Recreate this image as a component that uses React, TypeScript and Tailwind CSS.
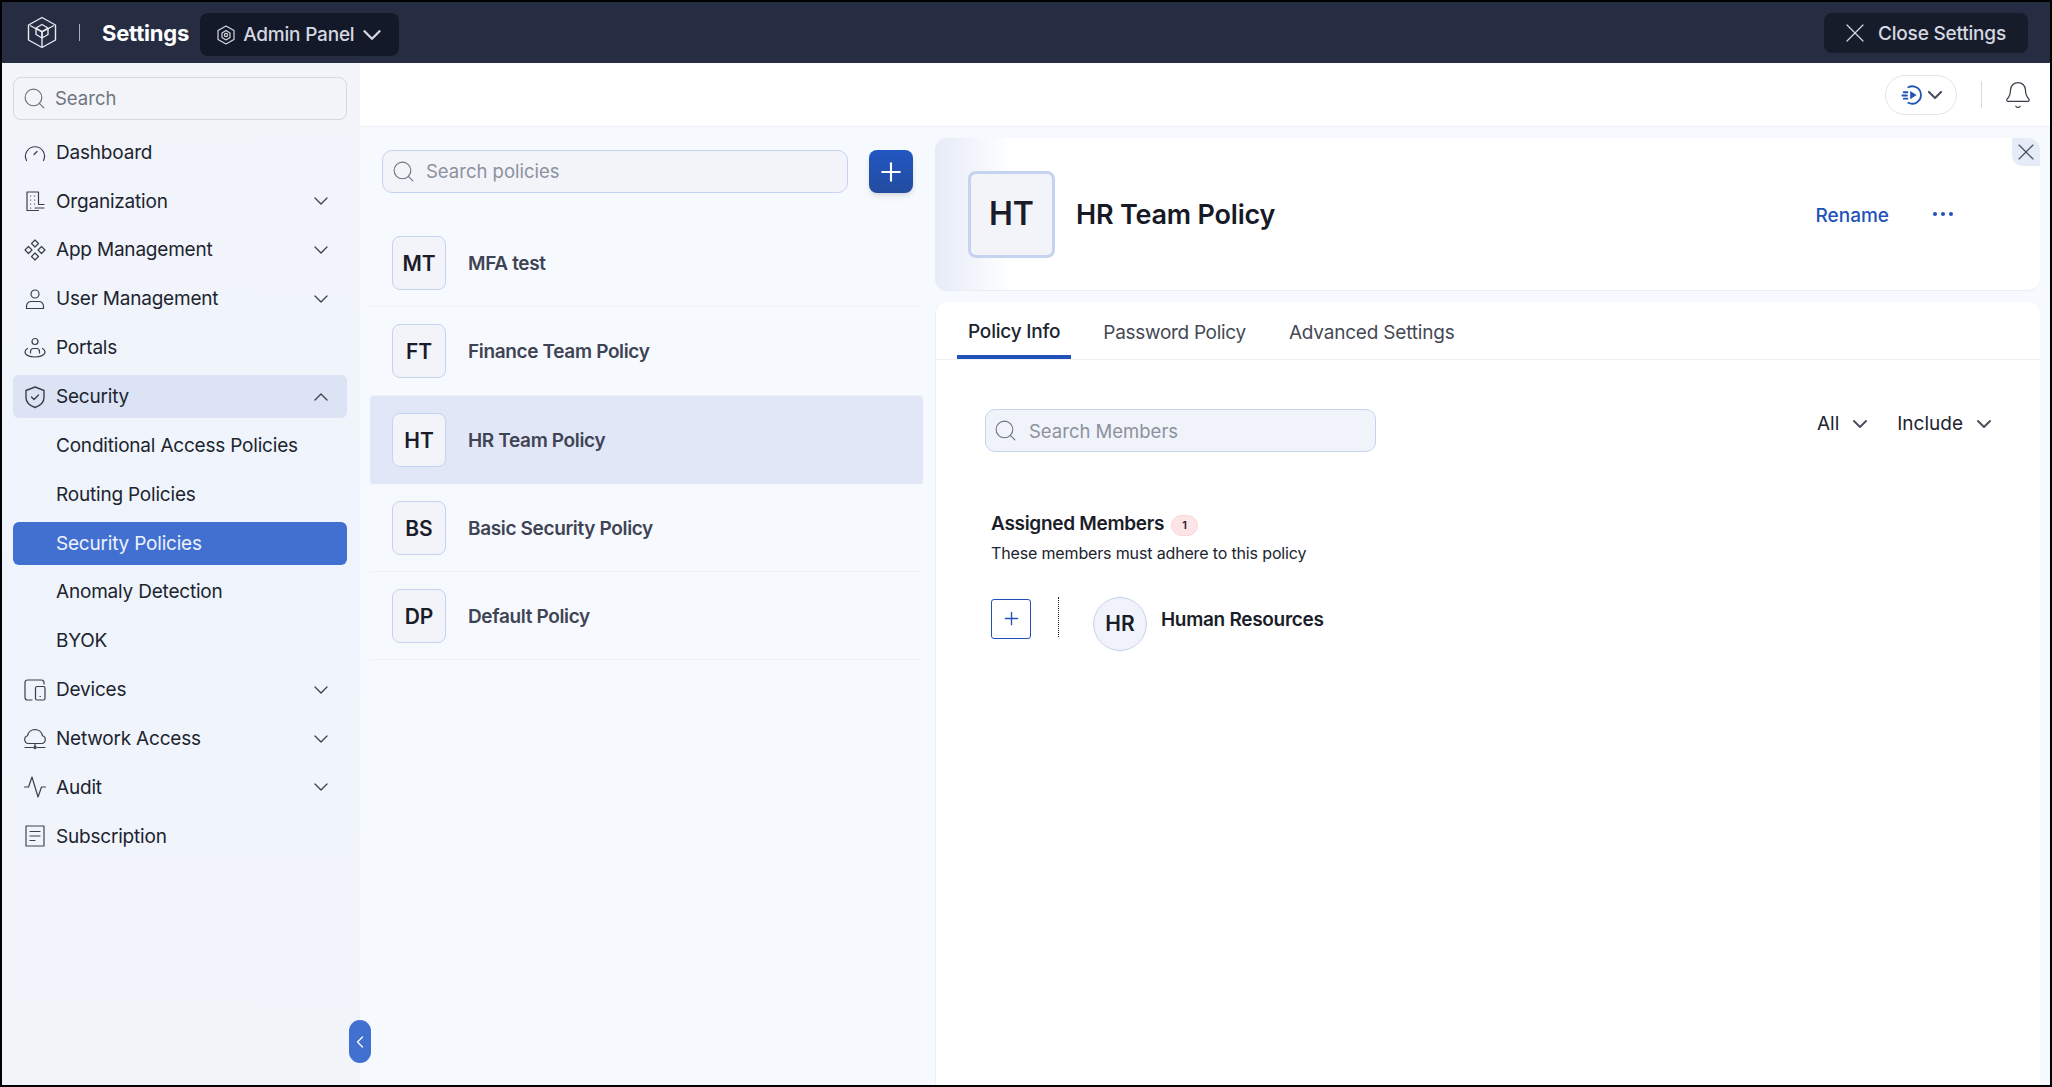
import React from 'react';
import { Search, ChevronDown, ChevronUp, ChevronLeft, X, Plus, Bell } from 'lucide-react';

type IconProps = { className?: string };

const Svg: React.FC<IconProps & { children: React.ReactNode; w?: number }> = ({ className, children, w = 1.2 }) => (
  <svg viewBox="0 0 24 24" fill="none" stroke="currentColor" strokeWidth={w} strokeLinecap="round" strokeLinejoin="round" className={className}>
    {children}
  </svg>
);

const LogoIcon: React.FC<IconProps> = ({ className }) => (
  <svg viewBox="0 0 30 33" fill="none" stroke="currentColor" strokeWidth={1.4} strokeLinejoin="round" className={className}>
    <path d="M15 1.5 28.5 9v15L15 31.5 1.5 24V9z" />
    <path d="M3 9.5 15 16l12-6.500M15 16v15" />
    <path d="M15 8.500 21 12v6.500l-6 3.500-6-3.500V12z" />
    <path d="M9 12l6 3.500 6-3.500M15 15.500V22" />
  </svg>
);

const HexIcon: React.FC<IconProps> = ({ className }) => (
  <svg viewBox="0 0 18 20" fill="none" stroke="currentColor" strokeWidth={1.2} strokeLinejoin="round" className={className}>
    <path d="M9 1 17 5.500v9L9 19l-8-4.500v-9z" />
    <path d="M9 5.500 13 8v4.500L9 15l-4-2.500V8z" />
    <circle cx="9" cy="10" r="1.600" />
  </svg>
);

const DashboardIcon: React.FC<IconProps> = ({ className }) => (
  <Svg className={className}>
    <path d="M3.500 19.500a9.500 9.500 0 1 1 17 0" />
    <path d="m11 13.500 3-3" />
  </Svg>
);
const OrgIcon: React.FC<IconProps> = ({ className }) => (
  <Svg className={className}>
    <path d="M15.500 21.500H4V3h11.500v12" />
    <path d="M7.500 7h.2M11.500 7h.2M7.500 11h.2M11.500 11h.2M7.500 15h.2M7.500 19h.2M11.500 15h.2M15.500 15.500H21M12 19h9" />
  </Svg>
);
const AppIcon: React.FC<IconProps> = ({ className }) => (
  <Svg className={className}>
    <path d="m12 2 3.500 3.500L12 9 8.500 5.500zM12 15l3.500 3.500L12 22l-3.500-3.500zM5.500 8.500 9 12l-3.500 3.500L2 12zM18.500 8.500 22 12l-3.500 3.500L15 12z" />
  </Svg>
);
const UserIcon: React.FC<IconProps> = ({ className }) => (
  <Svg className={className}>
    <circle cx="12" cy="7" r="4" />
    <path d="M3.500 21.500v-2.500a4.500 4.500 0 0 1 4.500-4.500h8a4.500 4.500 0 0 1 4.500 4.500v2.500z" />
  </Svg>
);
const PortalIcon: React.FC<IconProps> = ({ className }) => (
  <Svg className={className}>
    <circle cx="12" cy="5.500" r="3" />
    <path d="M7.500 17v-1.500a3 3 0 0 1 3-3h3a3 3 0 0 1 3 3V17" />
    <path d="M4.500 12.500C2.900 13.400 2 14.600 2 16c0 3 4.500 5 10 5s10-2 10-5c0-1.400-.9-2.600-2.500-3.500" />
  </Svg>
);
const ShieldIcon: React.FC<IconProps> = ({ className }) => (
  <Svg className={className} w={1.4}>
    <path d="M12 2 21 5.500v7c0 5-4 8.300-9 10-5-1.700-9-5-9-10v-7z" />
    <path d="m8.500 12 2.500 2.500 4.500-4.500" />
  </Svg>
);
const DevicesIcon: React.FC<IconProps> = ({ className }) => (
  <Svg className={className}>
    <path d="M9 22H4.500A2.500 2.500 0 0 1 2 19.500v-15A2.500 2.500 0 0 1 4.500 2h14a2.500 2.500 0 0 1 2.500 2.500V6" />
    <rect x="12.500" y="8.500" width="9.500" height="13.500" rx="1.500" />
    <path d="M17 18.500h.4" />
  </Svg>
);
const NetworkIcon: React.FC<IconProps> = ({ className }) => (
  <Svg className={className}>
    <path d="M6 16.500h-.5a4 4 0 0 1-1-7.800A7.800 7.800 0 0 1 12 2.500a7.800 7.800 0 0 1 7.500 6.200 4 4 0 0 1-1 7.800z" />
    <path d="M12 16.500v4M2 20.500h7.500M14.500 20.500H22" />
    <circle cx="12" cy="20.500" r="1.200" />
  </Svg>
);
const AuditIcon: React.FC<IconProps> = ({ className }) => (
  <Svg className={className}>
    <path d="M1.500 12H5.500L9 2l6 20 3.500-10h4" />
  </Svg>
);
const ReceiptIcon: React.FC<IconProps> = ({ className }) => (
  <Svg className={className}>
    <path d="M3 2h18v20H3z" strokeDasharray="1.600 .6" />
    <path d="M7 7.500h10M7 12h10M7 16.500h5" />
  </Svg>
);
const PlayFastIcon: React.FC<IconProps> = ({ className }) => (
  <svg viewBox="0 0 24 24" fill="none" stroke="currentColor" strokeWidth={2} strokeLinecap="round" className={className}>
    <path d="M8 3.500a9.500 9.500 0 1 1 0 17M3 9h4M1.500 12.500h5M3 16h4" />
    <path d="M10 7.500 17 12l-7 4.500z" fill="currentColor" stroke="none" />
  </svg>
);

type NavItem = {
  label: string;
  icon?: React.FC<IconProps>;
  chevron?: 'down' | 'up';
  state?: 'open' | 'active';
};

const navItems: NavItem[] = [
  { label: 'Dashboard', icon: DashboardIcon },
  { label: 'Organization', icon: OrgIcon, chevron: 'down' },
  { label: 'App Management', icon: AppIcon, chevron: 'down' },
  { label: 'User Management', icon: UserIcon, chevron: 'down' },
  { label: 'Portals', icon: PortalIcon },
  { label: 'Security', icon: ShieldIcon, chevron: 'up', state: 'open' },
  { label: 'Conditional Access Policies' },
  { label: 'Routing Policies' },
  { label: 'Security Policies', state: 'active' },
  { label: 'Anomaly Detection' },
  { label: 'BYOK' },
  { label: 'Devices', icon: DevicesIcon, chevron: 'down' },
  { label: 'Network Access', icon: NetworkIcon, chevron: 'down' },
  { label: 'Audit', icon: AuditIcon, chevron: 'down' },
  { label: 'Subscription', icon: ReceiptIcon },
];

const policies = [
  { code: 'MT', name: 'MFA test' },
  { code: 'FT', name: 'Finance Team Policy' },
  { code: 'HT', name: 'HR Team Policy', selected: true },
  { code: 'BS', name: 'Basic Security Policy' },
  { code: 'DP', name: 'Default Policy' },
];

const Sidebar: React.FC = () => (
  <aside className="relative w-[358px] shrink-0 bg-gradient-to-b from-[#f2f4fa] via-[#eff4fc] to-[#f2f4fa] pl-[11px] pr-[13px] pt-[14px]">
    <div className="flex h-[43px] items-center rounded-[8px] border border-[#d5d8e0] bg-[#f2f4f9] pl-[8px] text-[#6b7280]">
      <Search className="h-[25px] w-[25px]" strokeWidth={1.1} />
      <span className="ml-[8px] text-[18.500px] text-[#6f7480]">Search</span>
    </div>
    <nav className="mt-[11px] flex flex-col gap-[5.85px]">
      {navItems.map(item => {
        const Icon = item.icon;
        return (
          <div
            key={item.label}
            className={`flex h-[43px] items-center rounded-[6px] pl-[12px] pr-[14px] text-[19px] tracking-[-0.2px] ${
              item.state === 'active'
                ? 'bg-[#4270d1] text-[#eef2fb]'
                : item.state === 'open'
                  ? 'bg-[#dbe3f5] text-[#20242f]'
                  : 'text-[#20242f]'
            }`}
          >
            <span className="mr-[11px] flex w-[20px] shrink-0 justify-center text-[#3a3f4b]">
              {Icon && <Icon className="h-[24px] w-[24px] shrink-0" />}
            </span>
            <span className="flex-1 pt-[1px]">{item.label}</span>
            {item.chevron === 'down' && <ChevronDown className="h-[24px] w-[24px] text-[#3a3f4b]" strokeWidth={1.3} />}
            {item.chevron === 'up' && <ChevronUp className="h-[24px] w-[24px] text-[#3a3f4b]" strokeWidth={1.3} />}
          </div>
        );
      })}
    </nav>
    <div className="absolute left-[347px] top-[957px] z-10 flex h-[43px] w-[22px] items-center justify-center rounded-full bg-[#4270d1] text-white">
      <ChevronLeft className="h-[20px] w-[20px]" strokeWidth={1.5} />
    </div>
  </aside>
);

const PolicyList: React.FC = () => (
  <section className="w-[575px] shrink-0 pt-[23px]">
    <div className="flex items-center pl-[22px]">
      <div className="flex h-[43px] w-[466px] items-center rounded-[10px] border border-[#c5d3f0] bg-[#f2f4fa] pl-[8px] text-[#6b7280]">
        <Search className="h-[25px] w-[25px]" strokeWidth={1.05} />
        <span className="ml-[10px] text-[18.500px] text-[#8c919d]">Search policies</span>
      </div>
      <div className="ml-[21px] flex h-[43px] w-[44px] items-center justify-center rounded-[8px] bg-gradient-to-b from-[#2257c2] to-[#234c9f] text-white shadow-md">
        <Plus className="h-[30px] w-[30px]" strokeWidth={1.7} />
      </div>
    </div>
    <div className="ml-[10px] mt-[26px] w-[553px]">
      {policies.map(policy => (
        <div
          key={policy.code}
          className={`flex h-[88.300px] items-center pl-[22px] ${
            policy.selected ? 'rounded-[3px] bg-[#e1e7f7]' : 'border-b border-[#eef1f7]'
          }`}
        >
          <div className="flex h-[54px] w-[54px] items-center justify-center rounded-[8px] border border-[#c5d3f0] bg-[#f2f4fa] pt-[2px] text-[21px] font-semibold text-[#1a1d29]">
            {policy.code}
          </div>
          <span className="ml-[22px] pt-[3px] text-[19px] font-semibold tracking-[-0.35px] text-[#3f4454]">{policy.name}</span>
        </div>
      ))}
    </div>
  </section>
);

const DetailPanel: React.FC = () => (
  <section className="flex flex-1 flex-col gap-[11px] pr-[10px] pt-[11px]">
    <div className="relative flex h-[153px] shrink-0 items-center overflow-hidden rounded-[12px] border-b border-[#e8edf5] bg-gradient-to-r from-[#e6ebf8] via-white via-[7%] to-white pl-[33px] pr-[87px]">
      <div className="flex h-[87px] w-[87px] items-center justify-center rounded-[8px] border-[3px] border-[#c5d3f0] bg-[#f2f4fa] text-[32px] font-semibold text-[#1a1d29]">
        HT
      </div>
      <h1 className="ml-[21px] flex-1 pt-[2px] text-[27px] font-semibold tracking-[-0.2px] text-[#171a26]">HR Team Policy</h1>
      <span className="pt-[5px] text-[19px] font-medium text-[#2152b8]">Rename</span>
      <span className="ml-[44px] -mt-[1px] flex gap-[4px]">
        <i className="h-[4px] w-[4px] rounded-full bg-[#2152b8]" />
        <i className="h-[4px] w-[4px] rounded-full bg-[#2152b8]" />
        <i className="h-[4px] w-[4px] rounded-full bg-[#2152b8]" />
      </span>
      <div className="absolute right-0 top-0 flex h-[28px] w-[28px] items-center justify-center rounded-bl-[10px] bg-[#e6ebf8] text-[#4b5160]">
        <X className="h-[28px] w-[28px]" strokeWidth={1} />
      </div>
    </div>

    <div className="flex-1 rounded-t-[12px] border-l border-[#edf0f6] bg-white">
      <div className="flex h-[58px] items-end border-b border-[#eef0f4] pl-[21px] text-[19px] tracking-[-0.2px] text-[#444954]">
        <div className="flex h-full items-center border-b-[4px] border-[#2152b8] px-[11px] pt-[8px] font-medium text-[#20242f]">Policy Info</div>
        <div className="ml-[32px] flex h-full items-center pb-[1px] pt-[6px] tracking-[-0.3px]">Password Policy</div>
        <div className="ml-[43px] flex h-full items-center pb-[1px] pt-[6px]">Advanced Settings</div>
      </div>

      <div className="pl-[49px] pr-[44px] pt-[49px]">
        <div className="flex items-start justify-between">
          <div className="flex h-[43px] w-[391px] items-center rounded-[10px] border border-[#c5d3f0] bg-[#f0f3fa] pl-[7px] text-[#6b7280]">
            <Search className="h-[25px] w-[25px]" strokeWidth={1.05} />
            <span className="ml-[11px] pt-[3px] text-[18.500px] text-[#8c919d]">Search Members</span>
          </div>
          <div className="flex items-center pt-[1px] text-[19px] text-[#20242f]">
            <span>All</span>
            <ChevronDown className="ml-[9px] h-[24px] w-[24px] text-[#4b5160]" strokeWidth={2} />
            <span className="ml-[25px]">Include</span>
            <ChevronDown className="ml-[9px] h-[24px] w-[24px] text-[#4b5160]" strokeWidth={2} />
          </div>
        </div>

        <div className="ml-[6px] mt-[58px]">
          <div className="flex items-center">
            <h2 className="text-[19px] font-semibold tracking-[-0.3px] text-[#1a1d29]">Assigned Members</h2>
            <span className="ml-[7px] mt-[2px] flex h-[21px] w-[27px] items-center justify-center rounded-full border border-[#fbd5da] bg-[#fde4e7] text-[11px] font-semibold text-[#1a1d29]">1</span>
          </div>
          <p className="mt-[2px] text-[16px] tracking-[-0.15px] text-[#20242f]">These members must adhere to this policy</p>

          <div className="mt-[32px] flex items-start">
            <div className="mt-[2px] flex h-[40px] w-[40px] items-center justify-center rounded-[3px] border border-[#2152b8] text-[#2152b8]">
              <Plus className="h-[21px] w-[21px]" strokeWidth={1.5} />
            </div>
            <div className="ml-[27px] h-[40px] border-l border-dotted border-[#1a1d29]" />
            <div className="ml-[34px] flex h-[54px] w-[54px] items-center justify-center rounded-full border border-[#c5d3f0] bg-[#f0f3fa] text-[21px] font-semibold text-[#1a1d29]">
              HR
            </div>
            <span className="ml-[14px] mt-[9px] text-[19px] font-semibold tracking-[-0.3px] text-[#1a1d29]">Human Resources</span>
          </div>
        </div>
      </div>
    </div>
  </section>
);

const App: React.FC = () => (
  <div className="flex h-[1087px] w-[2052px] flex-col overflow-hidden border-2 border-black font-['Inter',sans-serif]">
    <header className="flex h-[61px] shrink-0 items-center bg-[#262d42] pl-[25px] pr-[22px] text-white">
      <LogoIcon className="h-[33px] w-[30px] text-[#e8eaf0]" />
      <span className="ml-[22px] h-[17px] w-px bg-[#a9adb9]" />
      <span className="ml-[22px] pt-[2px] text-[22px] font-bold tracking-[-0.2px]">Settings</span>
      <div className="ml-[11px] mt-[4px] flex h-[43px] w-[199px] items-center rounded-[8px] bg-[#14192a] pl-[17px] text-[#d5d8e0]">
        <HexIcon className="h-[20px] w-[18px]" />
        <span className="ml-[8px] pt-[1px] text-[19px] font-medium tracking-[-0.2px]">Admin Panel</span>
        <ChevronDown className="ml-[3px] h-[30px] w-[30px]" strokeWidth={1.9} />
      </div>
      <div className="ml-auto flex h-[40px] w-[204px] items-center rounded-[8px] bg-[#171c2b] pl-[15px] text-[#d5d8e0]">
        <X className="h-[32px] w-[32px]" strokeWidth={0.9} />
        <span className="ml-[7px] pt-[3px] text-[19px] font-medium tracking-[-0.2px]">Close Settings</span>
      </div>
    </header>

    <div className="flex min-h-0 flex-1">
      <Sidebar />
      <main className="flex min-w-0 flex-1 flex-col bg-[#f6f9fe]">
        <div className="flex h-[64px] shrink-0 items-center justify-end border-b border-[#eef1f6] bg-white pr-[17px]">
          <div className="flex h-[40px] w-[72px] items-center justify-center rounded-full border border-[#e2e4e9] pl-[6px]">
            <PlayFastIcon className="h-[22px] w-[22px] text-[#2152b8]" />
            <ChevronDown className="h-[24px] w-[24px] text-[#4b5160]" strokeWidth={2.2} />
          </div>
          <span className="ml-[24px] h-[27px] w-px bg-[#d5d8e0]" />
          <Bell className="ml-[21px] h-[30px] w-[30px] text-[#3a3f4b]" strokeWidth={1} />
        </div>
        <div className="flex min-h-0 flex-1">
          <PolicyList />
          <DetailPanel />
        </div>
      </main>
    </div>
  </div>
);

export default App;
